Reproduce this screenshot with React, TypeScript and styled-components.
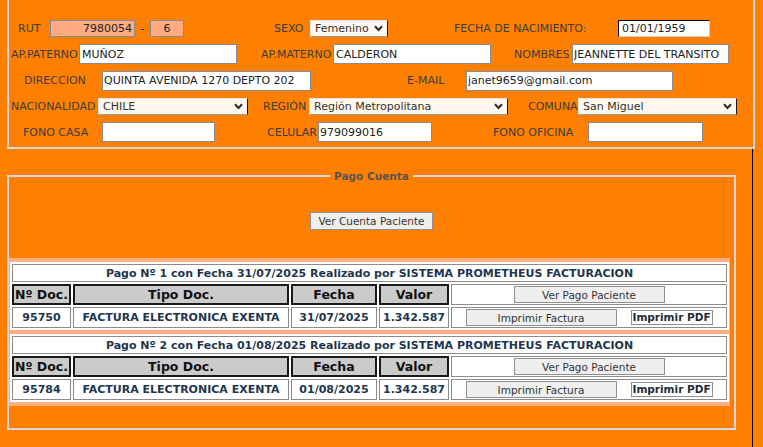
import React from 'react';
import styled, {createGlobalStyle} from 'styled-components';

const GlobalStyle = createGlobalStyle`
  html, body {
    margin: 0;
    padding: 0;
    background: #ff8000;
  }
  body {
    font-family: 'DejaVu Sans', Verdana, sans-serif;
    font-size: 11px;
    color: #3d3d3d;
  }
  * {
    box-sizing: border-box;
  }
`;

const Page = styled.div`
  width: 763px;
  height: 447px;
  padding-left: 7px;
  overflow: hidden;
`;

const PatientBox = styled.div`
  width: 748px;
  padding: 16px 0 2px;
  border: 2px solid #d6d6d6;
  border-top: none;
`;

const Row = styled.div<{h: number}>`
  display: flex;
  align-items: center;
  height: ${({h}) => h}px;
`;

const Label = styled.span<{w: number; pl: number}>`
  flex: none;
  width: ${({w}) => w}px;
  padding-left: ${({pl}) => pl}px;
  white-space: nowrap;
  color: #3d3d3d;
`;

const Dash = styled.span`
  flex: none;
  width: 15px;
  text-align: center;
  font-size: 12px;
  color: #222;
`;

type Tone = 'plain' | 'salmon' | 'inset';

const TextInput = styled.input<{w: number; h?: number; tone?: Tone; align?: string; pad?: number}>`
  flex: none;
  width: ${({w}) => w}px;
  height: ${({h}) => h || 20}px;
  margin: 0;
  padding: 0 ${({pad}) => pad ?? 2}px;
  font-family: 'DejaVu Sans', Verdana, sans-serif;
  font-size: 11px;
  color: #222;
  text-align: ${({align}) => align || 'left'};
  outline: none;
  border: 1px solid #8a8a8a;
  background: ${({tone}) => (tone === 'salmon' ? '#ffaa80' : '#fff')};
  ${({tone}) => tone === 'inset' && 'border-color: #000 #d0d0d0 #d0d0d0 #000;'}
`;

const SelectWrap = styled.div<{w: number}>`
  position: relative;
  flex: none;
  width: ${({w}) => w}px;
  height: 17px;
`;

const Select = styled.select`
  appearance: none;
  width: 100%;
  height: 100%;
  margin: 0;
  padding: 0 0 0 4px;
  font-family: 'DejaVu Sans', Verdana, sans-serif;
  font-size: 11px;
  color: #333;
  background: #fff8f1;
  border: 1px solid;
  border-color: #e4e4e4 #1a1a1a #9a9a9a #e4e4e4;
  border-radius: 0;
  outline: none;
`;

const Chevron = styled.svg`
  position: absolute;
  right: 5px;
  top: 5px;
  pointer-events: none;
`;

const Lower = styled.div`
  width: 746px;
  height: 298px;
  padding-top: 21px;
  border-right: 1px solid #000;
`;

const Fieldset = styled.fieldset`
  width: 729px;
  margin: 0;
  padding: 0 0 22px;
  min-width: 0;
  border: 2px solid #d6d6d6;
`;

const Legend = styled.legend`
  margin: 0 auto;
  padding: 0 4px;
  font-size: 10.5px;
  font-weight: bold;
  color: #555;
`;

const ActionRow = styled.div`
  display: flex;
  justify-content: center;
  margin-top: 30px;
`;

const GrayButton = styled.button<{w: number; h?: number}>`
  flex: none;
  width: ${({w}) => w}px;
  height: ${({h}) => h || 17}px;
  margin: 0;
  padding: 0;
  font-family: 'DejaVu Sans', Verdana, sans-serif;
  font-size: 10.5px;
  color: #333;
  background: #efefef;
  border: 1px solid #8f8f8f;
  white-space: nowrap;
`;

const PdfButton = styled.button`
  flex: none;
  width: 82px;
  height: 15px;
  margin: 0;
  padding: 0;
  font-family: 'DejaVu Sans', Verdana, sans-serif;
  font-size: 10.5px;
  font-weight: bold;
  line-height: 13px;
  color: #1f2b3a;
  background: #fff;
  border: 1px solid #8f8f8f;
  white-space: nowrap;
  overflow: hidden;
`;

const Payments = styled.div`
  width: 721px;
  margin-top: 28px;
  padding: 4px 1px;
  display: flex;
  flex-direction: column;
  gap: 4px;
  background: #ffad85;
`;

const PayTable = styled.table`
  width: 719px;
  table-layout: fixed;
  border-collapse: separate;
  border-spacing: 2px;
  background: #fff;
`;

const Col = styled.col<{w: number}>`
  width: ${({w}) => w}px;
`;

const TitleCell = styled.td`
  height: 18px;
  padding: 0;
  border: 1px solid #8c8c8c;
  text-align: center;
  font-weight: bold;
  color: #22364f;
  white-space: nowrap;
`;

const HeadCell = styled.th`
  height: 21px;
  padding: 0;
  border: 2px solid #1a1a1a;
  background: #cbcbcb;
  font-size: 12.5px;
  font-weight: bold;
  color: #111;
`;

const ValueCell = styled.td`
  height: 21px;
  padding: 0;
  border: 1px solid #8c8c8c;
  text-align: center;
  font-weight: bold;
  color: #22364f;
  white-space: nowrap;
`;

const ButtonCell = styled.td`
  height: 21px;
  padding: 0;
  border: 1px solid #8c8c8c;
`;

const ButtonGroup = styled.div`
  display: flex;
  justify-content: center;
  align-items: center;
  gap: 14px;
`;

const SelectBox = ({w, value}: {w: number; value: string}) => (
  <SelectWrap w={w}>
    <Select value={value} onChange={() => {}}>
      <option>{value}</option>
    </Select>
    <Chevron width='9' height='7' viewBox='0 0 9 7'>
      <path d='M1 1.2 L4.5 5 L8 1.2' fill='none' stroke='#2a2a2a' strokeWidth='2' />
    </Chevron>
  </SelectWrap>
);

const pagos = [
  {n: 1, fecha: '31/07/2025', doc: '95750'},
  {n: 2, fecha: '01/08/2025', doc: '95784'},
];

export default () => {
  return (
    <Page>
      <GlobalStyle />
      <PatientBox>
        <Row h={25}>
          <Label w={41} pl={9}>RUT</Label>
          <TextInput w={85} h={17} tone='salmon' align='right' value='7980054' readOnly />
          <Dash>-</Dash>
          <TextInput w={34} h={17} tone='salmon' align='center' value='6' readOnly />
          <Label w={126} pl={90}>SEXO</Label>
          <SelectBox w={78} value='Femenino' />
          <Label w={230} pl={66}>FECHA DE NACIMIENTO:</Label>
          <TextInput w={92} h={17} tone='inset' pad={3} value='01/01/1959' readOnly />
        </Row>
        <Row h={26}>
          <Label w={70} pl={2}>AP.PATERNO</Label>
          <TextInput w={158} value='MUÑOZ' readOnly />
          <Label w={96} pl={24}>AP.MATERNO</Label>
          <TextInput w={158} value='CALDERON' readOnly />
          <Label w={81} pl={23}>NOMBRES</Label>
          <TextInput w={157} pad={1} value='JEANNETTE DEL TRANSITO' readOnly />
        </Row>
        <Row h={27}>
          <Label w={93} pl={15}>DIRECCION</Label>
          <TextInput w={209} pad={1} value='QUINTA AVENIDA 1270 DEPTO 202' readOnly />
          <Label w={155} pl={96}>E-MAIL</Label>
          <TextInput w={207} pad={1} value='janet9659@gmail.com' readOnly />
        </Row>
        <Row h={25}>
          <Label w={89} pl={2}>NACIONALIDAD</Label>
          <SelectBox w={150} value='CHILE' />
          <Label w={61} pl={15}>REGIÓN</Label>
          <SelectBox w={199} value='Región Metropolitana' />
          <Label w={70} pl={20}>COMUNA</Label>
          <SelectBox w={159} value='San Miguel' />
        </Row>
        <Row h={26}>
          <Label w={93} pl={14}>FONO CASA</Label>
          <TextInput w={113} value='' readOnly />
          <Label w={103} pl={52}>CELULAR</Label>
          <TextInput w={114} pad={1} value='979099016' readOnly />
          <Label w={156} pl={61}>FONO OFICINA</Label>
          <TextInput w={115} value='' readOnly />
        </Row>
      </PatientBox>
      <Lower>
        <Fieldset>
          <Legend>Pago Cuenta</Legend>
          <ActionRow>
            <GrayButton w={123} h={18}>Ver Cuenta Paciente</GrayButton>
          </ActionRow>
          <Payments>
            {pagos.map((p) => (
              <PayTable key={p.n}>
                <colgroup>
                  <Col w={59} />
                  <Col w={216} />
                  <Col w={86} />
                  <Col w={70} />
                  <Col w={276} />
                </colgroup>
                <tbody>
                  <tr>
                    <TitleCell colSpan={5}>
                      Pago Nº {p.n} con Fecha {p.fecha} Realizado por SISTEMA PROMETHEUS FACTURACION
                    </TitleCell>
                  </tr>
                  <tr>
                    <HeadCell>Nº Doc.</HeadCell>
                    <HeadCell>Tipo Doc.</HeadCell>
                    <HeadCell>Fecha</HeadCell>
                    <HeadCell>Valor</HeadCell>
                    <ButtonCell>
                      <ButtonGroup>
                        <GrayButton w={151}>Ver Pago Paciente</GrayButton>
                      </ButtonGroup>
                    </ButtonCell>
                  </tr>
                  <tr>
                    <ValueCell>{p.doc}</ValueCell>
                    <ValueCell>FACTURA ELECTRONICA EXENTA</ValueCell>
                    <ValueCell>{p.fecha}</ValueCell>
                    <ValueCell>1.342.587</ValueCell>
                    <ButtonCell>
                      <ButtonGroup>
                        <GrayButton w={151}>Imprimir Factura</GrayButton>
                        <PdfButton>Imprimir PDF</PdfButton>
                      </ButtonGroup>
                    </ButtonCell>
                  </tr>
                </tbody>
              </PayTable>
            ))}
          </Payments>
        </Fieldset>
      </Lower>
    </Page>
  );
};
